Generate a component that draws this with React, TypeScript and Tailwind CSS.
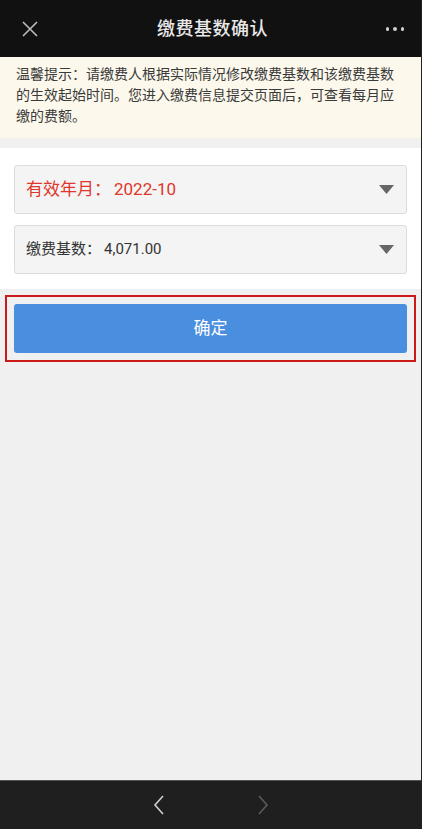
import React from "react";

const font = { fontFamily: 'Roboto, "Noto Sans CJK SC", "Noto Sans", sans-serif' };

function Caret() {
  return (
    <svg width="15" height="10" viewBox="0 0 15 10" className="shrink-0">
      <polygon points="0,0 15,0 7.5,9" fill="#666" />
    </svg>
  );
}

export default function App() {
  return (
    <div className="w-[422px] h-[829px] flex flex-col bg-[#f0f0f0] border-r border-[#222]" style={font}>
      {/* header */}
      <div className="h-[57px] bg-[#111111] flex items-center justify-between px-[21px] shrink-0">
        <svg width="18" height="18" viewBox="0 0 18 18">
          <path d="M2 2L16 16M16 2L2 16" stroke="#bdbdbd" strokeWidth="1.6" />
        </svg>
        <div className="text-[18px] text-[#e8e8e8] font-medium tracking-[0.5px]">缴费基数确认</div>
        <div className="flex gap-[4px] items-center w-[18px] justify-end mr-[-4px]">
          <span className="w-[4px] h-[4px] rounded-full bg-[#cfcfcf]" />
          <span className="w-[4px] h-[4px] rounded-full bg-[#cfcfcf]" />
          <span className="w-[4px] h-[4px] rounded-full bg-[#cfcfcf]" />
        </div>
      </div>

      {/* notice */}
      <div className="bg-[#fcf8ec] pl-[16px] pr-[14px] pt-[7px] pb-[11px] text-[14px] leading-[21px] text-[#3a3a3a]">
        温馨提示：请缴费人根据实际情况修改缴费基数和该缴费基数的生效起始时间。您进入缴费信息提交页面后，可查看每月应缴的费额。
      </div>

      <div className="h-[10px]" />

      {/* form */}
      <div className="bg-white px-[14px] pt-[17px] pb-[15px] flex flex-col gap-[11px]">
        <div className="h-[49px] rounded-[3px] border border-[#dcdcdc] bg-[#f4f4f4] flex items-center justify-between pl-[11px] pr-[12px]">
          <span className="text-[17px] text-[#e0362b]">
            有效年月：<span className="ml-[3px]">2022-10</span>
          </span>
          <Caret />
        </div>
        <div className="h-[49px] rounded-[3px] border border-[#dcdcdc] bg-[#f4f4f4] flex items-center justify-between pl-[11px] pr-[12px]">
          <span className="text-[15px] text-[#333]">
            缴费基数：<span className="ml-[3px]">4,071.00</span>
          </span>
          <Caret />
        </div>
      </div>

      {/* button */}
      <div className="mx-[5px] mt-[6px] border-2 border-[#cc1a1a] px-[7px] py-[7px]">
        <div className="h-[49px] rounded-[3px] bg-[#4a8ee0] flex items-center justify-center text-[17px] text-white">
          确定
        </div>
      </div>

      <div className="flex-1" />

      {/* bottom bar */}
      <div className="h-[49px] bg-[#1f1f1f] border-t border-[#555] flex items-center justify-center gap-[92px] shrink-0">
        <svg width="12" height="20" viewBox="0 0 12 20">
          <path d="M10 1L2 10L10 19" stroke="#d0d0d0" strokeWidth="1.6" fill="none" />
        </svg>
        <svg width="12" height="20" viewBox="0 0 12 20">
          <path d="M2 1L10 10L2 19" stroke="#5a5a5a" strokeWidth="1.6" fill="none" />
        </svg>
      </div>
    </div>
  );
}
